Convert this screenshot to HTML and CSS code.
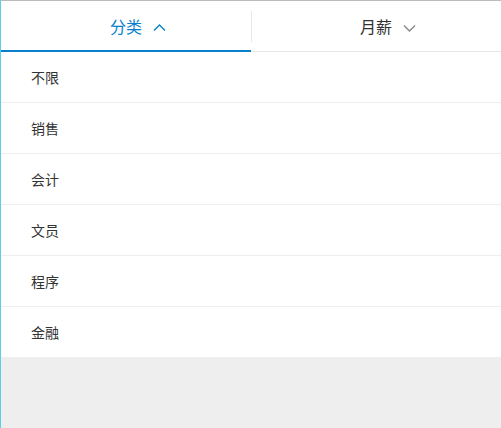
FILE: index.html
```html
<!DOCTYPE html>
<html lang="zh-CN">
<head>
    <meta charset="UTF-8">
    <meta name="viewport" content="width=device-width, initial-scale=1.0">
    <title>职位筛选</title>
    <link rel="stylesheet" href="styles.css">
</head>
<body>
    <div class="page">
        <div class="tabs">
            <div class="tab active">
                <span class="tab-label">分类
                    <svg class="arrow" width="13" height="7" viewBox="0 0 13 7"><path d="M1 6.5 L6.5 1 L12 6.5" fill="none" stroke="currentColor" stroke-width="1.4"/></svg>
                </span>
            </div>
            <div class="tab">
                <span class="tab-label">月薪
                    <svg class="arrow" width="13" height="7" viewBox="0 0 13 7"><path d="M1 0.5 L6.5 6 L12 0.5" fill="none" stroke="currentColor" stroke-width="1.4"/></svg>
                </span>
            </div>
        </div>
        <ul class="options">
            <li>不限</li>
            <li>销售</li>
            <li>会计</li>
            <li>文员</li>
            <li>程序</li>
            <li>金融</li>
        </ul>
    </div>
</body>
</html>
```

FILE: styles.css
```css
html, body {
    margin: 0;
    height: 100%;
}

body {
    font-family: "Noto Sans CJK SC", "Noto Sans", sans-serif;
    background: #eeeeee;
    color: #333;
}

.page {
    min-height: 100%;
    box-sizing: border-box;
    border-top: 1px solid #bbbbbb;
    border-left: 1px solid #5ccdec;
}

.tabs {
    display: flex;
    background: #fff;
    border-bottom: 1px solid #e6e6e6;
}

.tab {
    flex: 1;
    height: 50px;
    display: flex;
    align-items: center;
    justify-content: center;
    position: relative;
    font-size: 16px;
    color: #333;
}

.tab + .tab::before {
    content: "";
    position: absolute;
    left: 0;
    top: 10px;
    bottom: 9px;
    width: 1px;
    background: #e8e8e8;
}

.tab.active {
    color: #0a7fcc;
}

.tab.active::after {
    content: "";
    position: absolute;
    left: 0;
    right: 0;
    bottom: -1px;
    height: 2px;
    background: #0a7fcc;
}

.tab-label {
    position: relative;
    line-height: 20px;
}

.arrow {
    position: absolute;
    left: 100%;
    top: 8px;
    margin-left: 11px;
    color: #0a7fcc;
}

.tab:not(.active) .arrow {
    color: #888;
    top: 9px;
}

.options {
    list-style: none;
    margin: 0;
    padding: 0;
    background: #fff;
}

.options li {
    height: 50px;
    line-height: 50px;
    padding-left: 30px;
    font-size: 14px;
    color: #333;
    border-bottom: 1px solid #eeeeee;
}

.options li:last-child {
    border-bottom: none;
}
```
